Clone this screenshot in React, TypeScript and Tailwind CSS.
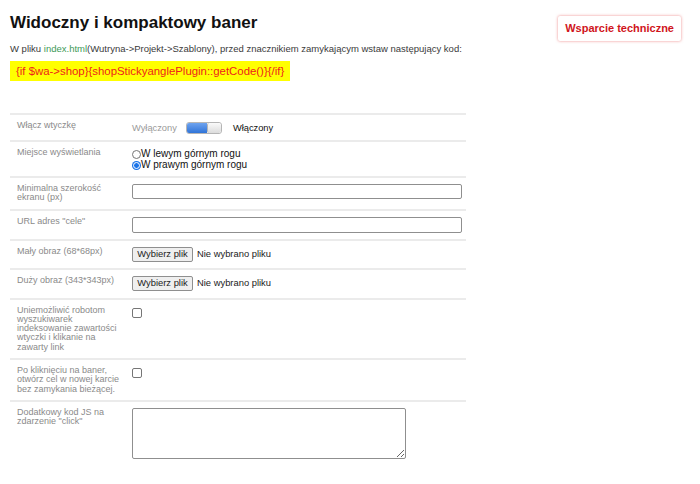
import React from 'react';

const font = { fontFamily: '"Liberation Sans", Arial, sans-serif' };

const Row: React.FC<{ label: React.ReactNode; children?: React.ReactNode }> = ({ label, children }) => (
  <div className="flex border-t-2 border-[#ebebeb] px-[7px] pt-[6px] pb-[6px]">
    <div className="w-[115px] shrink-0 pr-2 text-[9px] leading-[9.3px] text-[#8a8a8a]">{label}</div>
    <div className="flex-1">{children}</div>
  </div>
);

const FileField = () => (
  <div className="flex items-center gap-[4px] text-[9.4px] text-[#222]">
    <span className="flex h-[15px] w-[61px] items-center justify-center rounded-[2px] border border-[#8f8f8f] bg-[#efefef]">
      Wybierz plik
    </span>
    <span>Nie wybrano pliku</span>
  </div>
);

const Radio: React.FC<{ checked?: boolean; label: string }> = ({ checked, label }) => (
  <label className="flex h-[10px] items-center text-[10px] leading-[10px] text-[#111]">
    {checked ? (
      <span className="flex h-[9px] w-[9px] items-center justify-center rounded-full bg-[#1a73e8]">
        <span className="h-[7px] w-[7px] rounded-full border-[1.5px] border-white bg-[#1a73e8]" />
      </span>
    ) : (
      <span className="h-[9px] w-[9px] rounded-full border border-[#767676] bg-white" />
    )}
    <span>{label}</span>
  </label>
);

const Checkbox = () => (
  <span className="mt-[2px] block h-[10px] w-[10px] rounded-[2px] border border-[#767676] bg-white" />
);

export default function App() {
  return (
    <div className="min-h-[484px] bg-white px-[10px] pt-[13px]" style={font}>
      <div className="flex items-start justify-between">
        <div>
          <h1 className="text-[17px] font-bold leading-[20px] text-[#111]">Widoczny i kompaktowy baner</h1>
          <p className="mt-[10px] text-[9.5px] leading-[12px] text-[#3a3a3a]">
            W pliku <span className="text-[#3e9a57]">index.html</span>(Wutryna-&gt;Projekt-&gt;Szablony), przed znacznikiem
            zamykającym wstaw następujący kod:
          </p>
          <div className="mt-[6px] inline-block bg-[#ffff00] px-[6px] py-[3px] text-[11.4px] leading-[14px] text-[#ee1c1c]">
            {'{if $wa->shop}{shopStickyanglePlugin::getCode()}{/if}'}
          </div>
        </div>
        <div className="mr-[9px] mt-[3px] rounded-[2px] bg-white px-[7px] py-[6px] text-[11px] font-bold leading-[13px] text-[#d0141c] shadow-[0_0_3px_rgba(220,40,40,0.55)]">
          Wsparcie techniczne
        </div>
      </div>

      <div className="mt-[31px] w-[456px]">
        <Row label="Włącz wtyczkę">
          <div className="flex h-[13px] items-center text-[9.3px] leading-[10px]">
            <span className="text-[#9a9a9a]">Wyłączony</span>
            <span className="ml-[9px] flex h-[12px] w-[36px] overflow-hidden rounded-[3px] border border-[#b5b5b5]">
              <span className="flex-1 bg-gradient-to-b from-[#6ea3ef] to-[#2f74d8]" />
              <span className="w-[14px] rounded-[2px] border-l border-[#b5b5b5] bg-gradient-to-b from-[#fafafa] to-[#dcdcdc]" />
            </span>
            <span className="ml-[11px] text-[#111]">Włączony</span>
          </div>
        </Row>
        <Row label="Miejsce wyświetlania">
          <div className="flex flex-col gap-[1px] pt-[1px]">
            <Radio label="W lewym górnym rogu" />
            <Radio checked label="W prawym górnym rogu" />
          </div>
        </Row>
        <Row label={<>Minimalna szerokość<br />ekranu (px)</>}>
          <input className="block h-[15px] w-[330px] rounded-[2px] border border-[#8f8f8f] bg-white" />
        </Row>
        <Row label={'URL adres "cele"'}>
          <input className="block h-[16px] w-[330px] rounded-[2px] border border-[#8f8f8f] bg-white" />
        </Row>
        <Row label="Mały obraz (68*68px)">
          <FileField />
        </Row>
        <Row label="Duży obraz (343*343px)">
          <div className="pb-[1px]">
            <FileField />
          </div>
        </Row>
        <Row
          label={
            <>
              Uniemożliwić robotom
              <br />
              wyszukiwarek
              <br />
              indeksowanie zawartości
              <br />
              wtyczki i klikanie na
              <br />
              zawarty link
            </>
          }
        >
          <Checkbox />
        </Row>
        <Row
          label={
            <>
              Po kliknięciu na baner,
              <br />
              otwórz cel w nowej karcie
              <br />
              bez zamykania bieżącej.
            </>
          }
        >
          <Checkbox />
        </Row>
        <Row label={<>Dodatkowy kod JS na<br />zdarzenie "click"</>}>
          <textarea className="block h-[51px] w-[274px] resize-y rounded-[2px] border border-[#8f8f8f] bg-white" />
        </Row>
      </div>
    </div>
  );
}
